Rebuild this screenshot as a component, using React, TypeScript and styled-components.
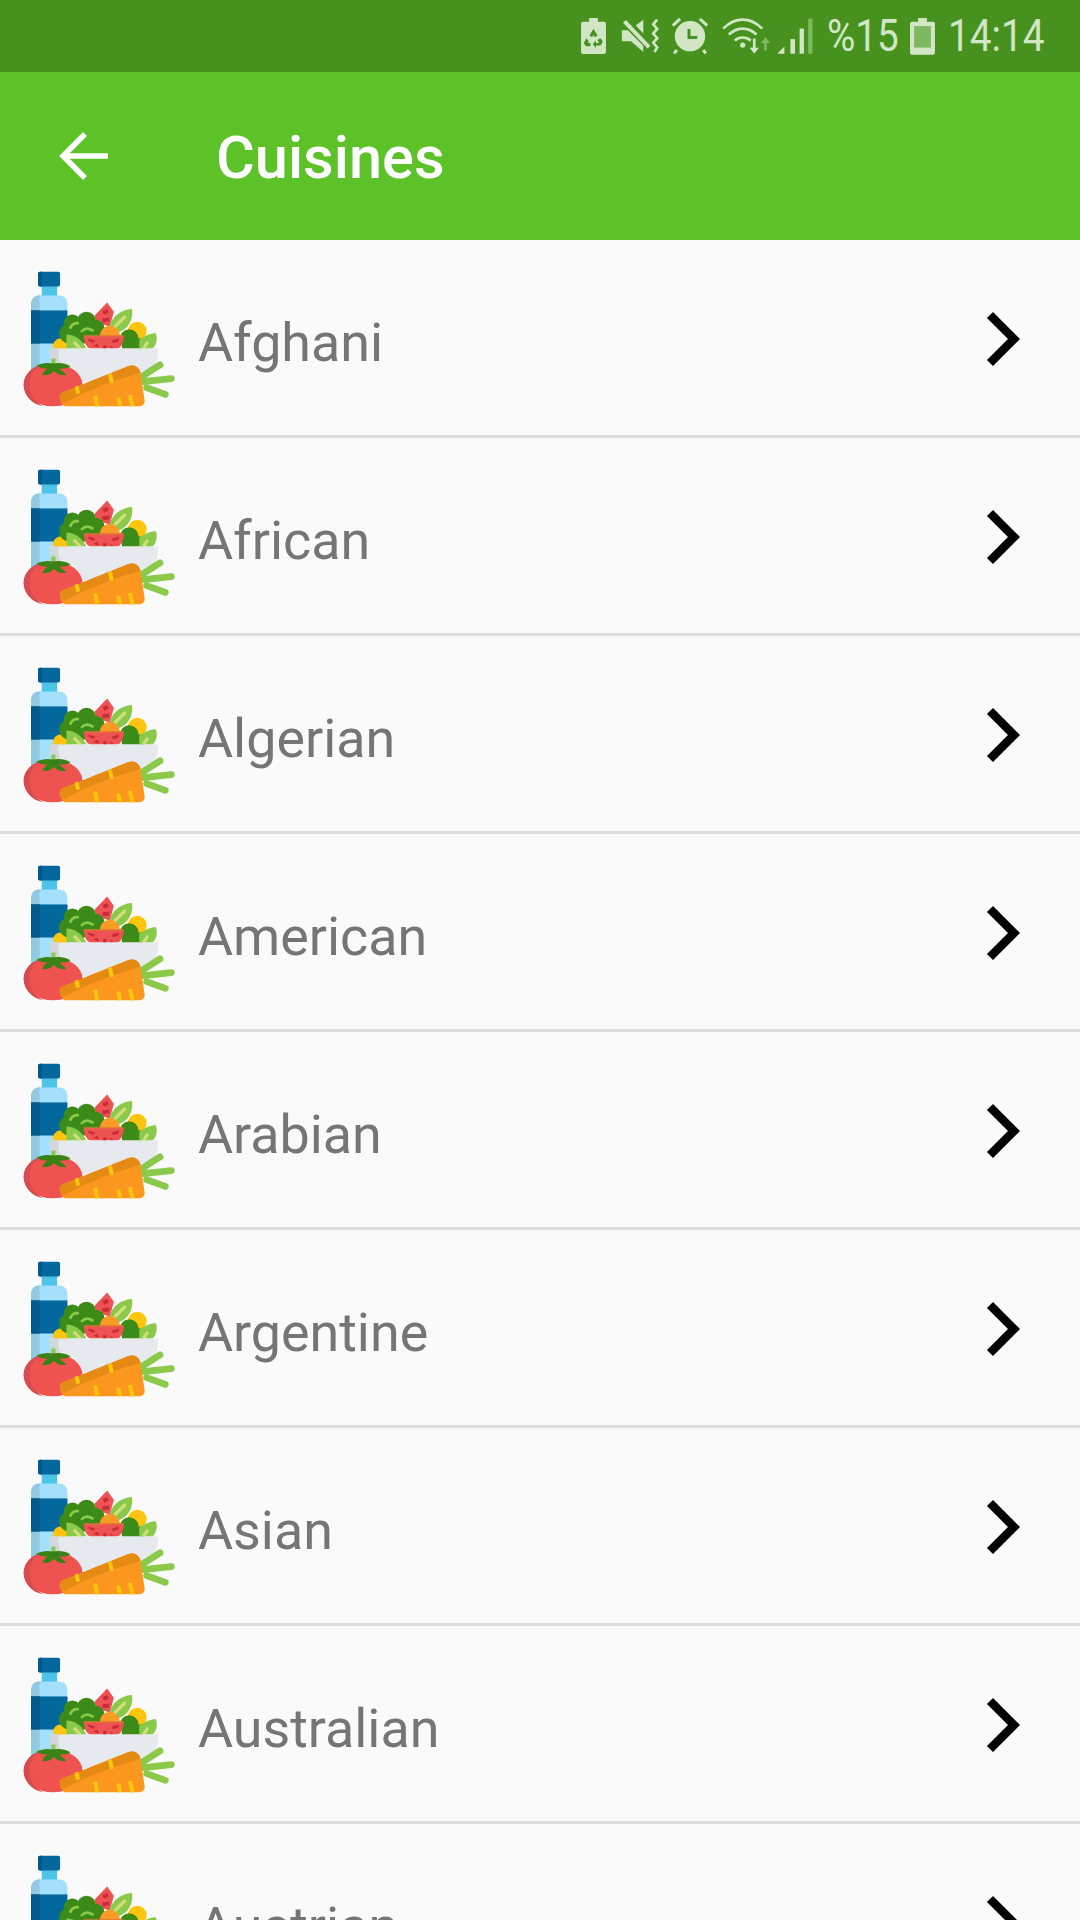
import React from 'react';
import styled, { createGlobalStyle } from 'styled-components';

const GlobalStyle = createGlobalStyle`
  html, body {
    margin: 0;
    padding: 0;
    height: 1920px;
    overflow: hidden;
    background: #fafafa;
    font-family: Roboto, "Noto Sans", sans-serif;
  }
`;

const Page = styled.div`
  width: 1080px;
  height: 1920px;
  overflow: hidden;
  display: flex;
  flex-direction: column;
`;

const StatusBar = styled.div`
  height: 72px;
  flex-shrink: 0;
  background: #47921f;
  color: #d2e6c6;
  display: flex;
  align-items: center;
  justify-content: flex-end;
  padding-right: 36px;
`;

const StatusText = styled.span<{ $w: number; $ml: number }>`
  display: inline-block;
  width: ${p => p.$w}px;
  margin-left: ${p => p.$ml}px;
  font-size: 44px;
  line-height: 72px;
  white-space: nowrap;
  transform: scaleX(0.88);
  transform-origin: left center;
`;

const StatusIcon = styled.svg<{ $ml: number }>`
  display: block;
  margin-left: ${p => p.$ml}px;
  flex-shrink: 0;
`;

const AppBar = styled.header`
  height: 168px;
  flex-shrink: 0;
  background: #5cc227;
  display: flex;
  align-items: center;
  padding-left: 58px;
`;

const BackIcon = styled.svg`
  display: block;
  width: 52px;
  height: 52px;
`;

const Title = styled.h1`
  margin: 4px 0 0 106px;
  font-size: 59.5px;
  font-weight: 500;
  color: #fff;
`;

const List = styled.div`
  display: flex;
  flex-direction: column;
`;

const Row = styled.div`
  height: 195px;
  flex-shrink: 0;
  display: flex;
  align-items: center;
  background: #fafafa;
  border-bottom: 3px solid #dedede;
  padding: 0 57px 0 23px;
`;

const FoodIcon = styled.svg`
  display: block;
  width: 152px;
  height: 137px;
  flex-shrink: 0;
  margin-top: 1px;
`;

const Name = styled.span`
  flex: 1;
  margin: 9px 0 0 23px;
  font-size: 53.8px;
  color: #757575;
`;

const Chevron = styled.svg`
  display: block;
  width: 38px;
  height: 58px;
  margin-top: 3px;
`;

const cuisines = ['Afghani', 'African', 'Algerian', 'American', 'Arabian', 'Argentine', 'Asian', 'Australian', 'Austrian'];

const Food = () => (
  <FoodIcon viewBox="70 60 455 410">
    {/* bottle */}
    <rect x="126" y="100" width="46" height="40" fill="#4cc3e8" />
    <rect x="115" y="65" width="66" height="44" rx="6" fill="#05689d" />
    <path d="M115 71a6 6 0 0 1 6-6h6v44h-6a6 6 0 0 1-6-6z" fill="#005a8c" />
    <path d="M94 160a24 24 0 0 1 24-24h61a24 24 0 0 1 24 24v220H94z" fill="#a4e0fb" />
    <path d="M94 160a24 24 0 0 1 24-24h6a24 24 0 0 0-4 24v220H94z" fill="#8fc9e2" />
    <rect x="94" y="181" width="109" height="99" fill="#05689d" />
    <rect x="94" y="181" width="26" height="99" fill="#005a8c" />
    {/* salad */}
    <g transform="translate(150 135)">
      <circle cx="32" cy="152" r="22" fill="#fdc50e" />
      <path d="M172 22l20 28-12 44-40-12-6-20z" fill="#ee5253" />
      <path d="M158 48l14-6 5 10-14 7zM156 70l22-3v11l-18 3z" fill="#c62d36" />
      <circle cx="68" cy="84" r="26" fill="#3c8b18" />
      <circle cx="110" cy="78" r="28" fill="#3c8b18" />
      <circle cx="138" cy="100" r="26" fill="#3c8b18" />
      <circle cx="58" cy="115" r="30" fill="#3c8b18" />
      <circle cx="100" cy="118" r="28" fill="#3c8b18" />
      <path d="M62 98q6-16 22-14M96 108q14-14 32-2" fill="none" stroke="#8bc94a" strokeWidth="8" strokeLinecap="round" />
      <path d="M180 100c0-30 30-56 66-58 6 32-14 68-52 72z" fill="#8bc94a" />
      <path d="M194 96l30-30" stroke="#cfe07a" strokeWidth="10" strokeLinecap="round" />
      <circle cx="262" cy="108" r="28" fill="#fdc50e" />
      <circle cx="180" cy="122" r="30" fill="#fb9a25" />
      <circle cx="238" cy="130" r="28" fill="#3c8b18" />
      <rect x="216" y="130" width="62" height="30" fill="#3c8b18" />
      <path d="M268 134c14-12 34-20 50-20 6 20 0 36-10 46h-40z" fill="#8bc94a" />
      <path d="M280 160l14-20" stroke="#cfe07a" strokeWidth="9" />
      <path d="M50 118c26 0 48 18 60 42H50z" fill="#8bc94a" />
      <path d="M72 140l20 20" stroke="#cfe07a" strokeWidth="9" />
      <path d="M102 121h120c0 20-8 39-22 39h-76c-14 0-22-19-22-39z" fill="#ee5253" />
      <path d="M102 121h120v3H102z" fill="#d8822e" />
      <path d="M116 130l20 6-4 7-16-6zM186 136l22-6-3 10-16 4zM130 152l14-6 4 12zM160 150h10v10h-10zM176 150l14 6-4 4z" fill="#c62d36" />
    </g>
    {/* bowl */}
    <path d="M150 295h324c4 56-34 92-62 100H220c-36-8-72-46-70-100z" fill="#e6e9ed" />
    <path d="M150 295h26c-2 40 10 70 44 100-36-8-72-46-70-100z" fill="#d3d6da" />
    {/* tomato */}
    <ellipse cx="160" cy="404" rx="88" ry="64" fill="#ef5350" />
    <path d="M130 343c-34 6-58 30-58 61s24 58 60 64c-28-12-42-36-42-64s12-50 40-61z" fill="#d64c4f" />
    <path d="M155 325h12v24h-12z" fill="#8bc94a" />
    <path d="M110 346c16-8 34-10 50-6 16-4 36-2 52 8-10 8-24 8-32 6 4 8 16 14 20 20-14 2-28-2-38-12-8 10-22 14-34 12 2-8 10-16 16-20-12 2-24 0-34-8z" fill="#3a8216" />
    {/* carrot */}
    <path d="M430 376l50-32M430 394l84-9M440 412l56 20" fill="none" stroke="#8bc94a" strokeWidth="20" strokeLinecap="round" />
    <path d="M180 436c0-4 4-8 10-10l194-78c18-6 34 2 38 20l12 82c2 10-6 18-16 18H200c-14 0-20-20-20-32z" fill="#fb971f" />
    <path d="M180 436c0-4 4-8 10-10l194-78c18-6 34 2 38 20-64 16-176 58-226 90-8 2-16-10-16-22z" fill="#e58a14" />
    <path d="M330 370l6 28M230 408l5 22M286 436l6 32M355 442l6 26M390 434l8 34" fill="none" stroke="#fdc50e" strokeWidth="12" />
  </FoodIcon>
);

const App: React.FC = () => (
  <Page>
    <GlobalStyle />
    <StatusBar>
      <StatusIcon $ml={0} width="25" height="37" viewBox="68 58 74 110">
        <path d="M92 58h26v11h18a6 6 0 0 1 6 6v84a6 6 0 0 1-6 6H74a6 6 0 0 1-6-6V75a6 6 0 0 1 6-6h18z" fill="currentColor" />
        <path d="M105 90l-12 20 8 5 4-7 4 7 8-5zM84 118l-8 14 6 10h14v-10h-8l3-5zM126 118l-9 5 4 9h-9v-8l-9 12 9 12v-8h14l7-12z" fill="#47921f" />
      </StatusIcon>
      <StatusIcon $ml={15} width="39" height="37" viewBox="8 25 117 112">
        <path d="M10 62h18l47 47v19L38 95H10zM52 48l23-18v42z" fill="currentColor" />
        <path d="M18 35l74 78" fill="none" stroke="currentColor" strokeWidth="12" />
        <path d="M117 30l-12 14 12 14-12 14 12 14-12 14 12 14-8 14" fill="none" stroke="currentColor" strokeWidth="8" />
      </StatusIcon>
      <StatusIcon $ml={12} width="36" height="37" viewBox="340 55 108 112">
        <circle cx="394" cy="110" r="46" fill="currentColor" />
        <path d="M342 78l22-20M446 78l-22-20M354 152l-8 10M434 152l8 10" stroke="currentColor" strokeWidth="9" fill="none" />
        <path d="M391 88v26h25" fill="none" stroke="#47921f" strokeWidth="9" />
      </StatusIcon>
      <StatusIcon $ml={14} width="50" height="37" viewBox="488 52 150 112">
        <path d="M491 84c36-36 82-36 118 0M508 102c26-24 58-24 84 0M526 120c14-12 34-12 48 0" fill="none" stroke="currentColor" strokeWidth="8" />
        <circle cx="550" cy="134" r="8" fill="currentColor" />
        <path d="M581 114h8v28h10l-14 18-14-18h10z" fill="currentColor" />
        <path d="M615 150v-22h-10l14-18 14 18h-10v22z" fill="#7fb95f" />
      </StatusIcon>
      <StatusIcon $ml={5} width="36" height="37" viewBox="652 52 108 112">
        <path d="M652 160l22-22v22z" fill="currentColor" />
        <rect x="692" y="116" width="14" height="44" fill="currentColor" />
        <rect x="720" y="84" width="13" height="76" fill="currentColor" />
        <rect x="746" y="54" width="13" height="106" fill="#7fb95f" />
      </StatusIcon>
      <StatusText $w={71} $ml={14}>%15</StatusText>
      <StatusIcon $ml={12} width="25" height="37" viewBox="1052 56 74 110">
        <path d="M1076 56h26v11h18a6 6 0 0 1 6 6v86a6 6 0 0 1-6 6h-62a6 6 0 0 1-6-6V73a6 6 0 0 1 6-6h18z" fill="currentColor" />
        <rect x="1064" y="80" width="50" height="64" fill="#7fb95f" />
      </StatusIcon>
      <StatusText $w={96} $ml={13}>14:14</StatusText>
    </StatusBar>
    <AppBar>
      <BackIcon viewBox="0 0 52 52" fill="none" stroke="#fff" strokeWidth="5.5">
        <path d="M50 26H5M27 4L5 26l22 22" />
      </BackIcon>
      <Title>Cuisines</Title>
    </AppBar>
    <List>
      {cuisines.map(c => (
        <Row key={c}>
          <Food />
          <Name>{c}</Name>
          <Chevron viewBox="0 0 38 58" fill="none" stroke="#000" strokeWidth="8.5">
            <path d="M5 5l24 24L5 53" />
          </Chevron>
        </Row>
      ))}
    </List>
  </Page>
);

export default App;
